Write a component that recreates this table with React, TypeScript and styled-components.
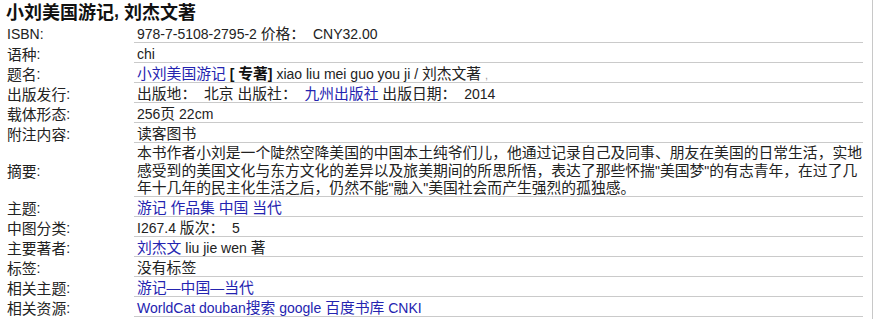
import React from "react";
import styled, { createGlobalStyle } from "styled-components";

const Global = createGlobalStyle`
  html, body { margin: 0; padding: 0; background: #fff; }
  body {
    font-family: "Liberation Sans", Arial, "Noto Sans CJK SC", sans-serif;
    color: #222;
  }
`;

const Page = styled.div`
  width: 873px;
  height: 319px;
  box-sizing: border-box;
  border-right: 1px solid #c8c8c8;
  padding-left: 5px;
`;

const Heading = styled.h1`
  margin: 0;
  font-size: 18px;
  line-height: 23px;
  font-weight: bold;
  color: #111;
  padding-left: 1px;
  white-space: nowrap;
`;

const Table = styled.div`
  display: grid;
  grid-template-columns: 129px 729px;
  font-size: 14px;
`;

const Label = styled.div`
  display: flex;
  align-items: center;
  padding: 2px 0 0 2px;
  line-height: 18px;
  color: #222;
  white-space: nowrap;
`;

const Value = styled.div<{ $tall?: boolean }>`
  border-bottom: 1px solid #cacaca;
  padding: 2px 0 0 3px;
  height: ${(p) => (p.$tall ? "51px" : "17px")};
  line-height: ${(p) => (p.$tall ? "17.7px" : "18px")};
  white-space: nowrap;
  color: #222;
`;

const Zh = styled.span<{ $big?: boolean }>`
  font-family: "Noto Sans CJK SC", sans-serif;
  font-size: ${(p) => (p.$big ? "inherit" : "14.8px")};
  line-height: ${(p) => (p.$big ? "23px" : "14px")};
  vertical-align: ${(p) => (p.$big ? "top" : "baseline")};
`;

const Link = styled.a`
  color: #2424b0;
  text-decoration: none;
`;

const Strong = styled.b`
  color: #111;
`;

const Faint = styled.span`
  color: #999;
  font-size: 11px;
`;

// Split a string into runs of CJK / Latin so CJK can render a size larger, as in the original page.
function T({ children, big }: { children: string; big?: boolean }) {
  const parts = children.split(/([\u3000-\u303f\u4e00-\u9fff\uff00-\uffef]+)/);
  return (
    <>
      {parts.map((p, i) =>
        i % 2 === 1 ? (
          <Zh key={i} $big={big}>
            {p}
          </Zh>
        ) : (
          <React.Fragment key={i}>{p}</React.Fragment>
        )
      )}
    </>
  );
}

const rows: { label: string; value: React.ReactNode; tall?: boolean }[] = [
  { label: "ISBN:", value: <T>{"978-7-5108-2795-2 价格：\u00a0 CNY32.00"}</T> },
  { label: "语种:", value: <T>chi</T> },
  {
    label: "题名:",
    value: (
      <>
        <Link href="#"><T>小刘美国游记</T></Link> <Strong>[ <T>专著</T>]</Strong> <T>xiao liu mei guo you ji / 刘杰文著</T>{" "}
        <Faint>,</Faint>
      </>
    ),
  },
  {
    label: "出版发行:",
    value: (
      <>
        <T>{"出版地：\u00a0 北京 出版社：\u00a0 "}</T>
        <Link href="#"><T>九州出版社</T></Link> <T>{"出版日期：\u00a0 2014"}</T>
      </>
    ),
  },
  { label: "载体形态:", value: <T>256页 22cm</T> },
  { label: "附注内容:", value: <T>读客图书</T> },
  {
    label: "摘要:",
    tall: true,
    value: (
      <>
        <T>本书作者小刘是一个陡然空降美国的中国本土纯爷们儿，他通过记录自己及同事、朋友在美国的日常生活，实地</T>
        <br />
        <T>{'感受到的美国文化与东方文化的差异以及旅美期间的所思所悟，表达了那些怀揣"美国梦"的有志青年，在过了几'}</T>
        <br />
        <T>{'年十几年的民主化生活之后，仍然不能"融入"美国社会而产生强烈的孤独感。'}</T>
      </>
    ),
  },
  {
    label: "主题:",
    value: (
      <>
        <Link href="#"><T>游记</T></Link> <Link href="#"><T>作品集</T></Link> <Link href="#"><T>中国</T></Link>{" "}
        <Link href="#"><T>当代</T></Link>
      </>
    ),
  },
  { label: "中图分类:", value: <T>{"I267.4 版次：\u00a0 5"}</T> },
  {
    label: "主要著者:",
    value: (
      <>
        <Link href="#"><T>刘杰文</T></Link> <T>liu jie wen 著</T>
      </>
    ),
  },
  { label: "标签:", value: <T>没有标签</T> },
  { label: "相关主题:", value: <Link href="#"><T>游记—中国—当代</T></Link> },
  {
    label: "相关资源:",
    value: (
      <>
        <Link href="#">WorldCat</Link> <Link href="#"><T>douban搜索</T></Link> <Link href="#">google</Link>{" "}
        <Link href="#"><T>百度书库</T></Link> <Link href="#">CNKI</Link>
      </>
    ),
  },
];

export default function App() {
  return (
    <>
      <Global />
      <Page>
        <Heading>
          <T big>小刘美国游记</T>, <T big>刘杰文著</T>
        </Heading>
        <Table>
          {rows.map((r) => (
            <React.Fragment key={r.label}>
              <Label>
                <T>{r.label}</T>
              </Label>
              <Value $tall={r.tall}>{r.value}</Value>
            </React.Fragment>
          ))}
        </Table>
      </Page>
    </>
  );
}
